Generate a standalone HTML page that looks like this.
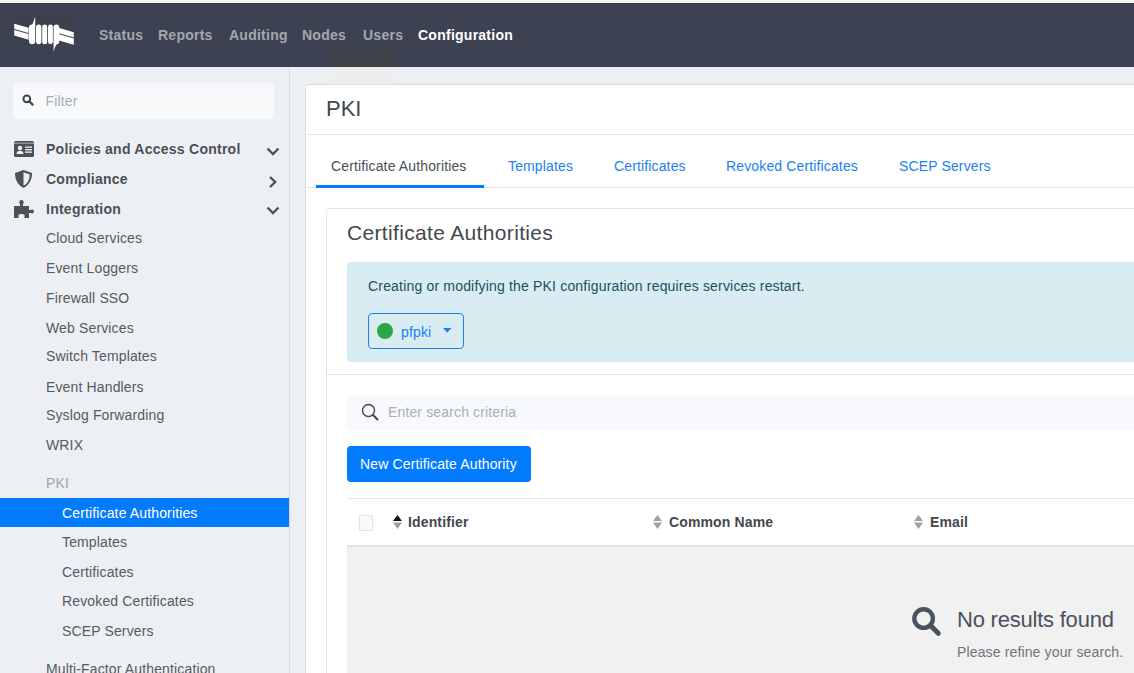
<!DOCTYPE html>
<html><head><meta charset="utf-8">
<style>
*{box-sizing:border-box;margin:0;padding:0}
html,body{width:1134px;height:673px;overflow:hidden;background:#eceff3;font-family:"Liberation Sans",sans-serif;font-size:14px;color:#495057;letter-spacing:0.01em}
.abs{position:absolute;white-space:nowrap}
#topband{left:0;top:0;width:1134px;height:3px;background:#f7f7f8}
#nav{left:0;top:3px;width:1134px;height:64px;background:#3d4252}
.nl{position:absolute;top:24px;font-weight:bold;letter-spacing:0.018em;font-size:14px;color:#a3a7af;line-height:16px}
#side{left:0;top:67px;width:289px;height:606px;background:#eceff3}
#sideborder{left:289px;top:67px;width:1px;height:606px;background:#d6d9de}
#filter{left:13px;top:83px;width:261px;height:36px;background:#f8f9fb;border-radius:4px}
.sh{position:absolute;left:46px;font-weight:bold;letter-spacing:0.018em;color:#4a4f56;line-height:16px}
.si{position:absolute;left:46px;color:#555b62;line-height:16px}
.ss{position:absolute;left:62px;color:#555b62;line-height:16px}
#active{left:0;top:498px;width:289px;height:29px;background:#037bfd}
#card{left:305px;top:84px;width:841px;height:600px;background:#fff;border:1px solid #dcdee2;border-radius:4px}
.tab{position:absolute;top:158px;color:#1b80f0;line-height:16px}
</style></head>
<body>
<div class="abs" id="topband"></div>
<div class="abs" id="nav">
  <div style="position:absolute;left:0;top:0;width:1134px;height:1px;background:#383c4a"></div>
  <div style="position:absolute;left:14px;top:13px;width:61px;height:28px;background:#3c414c"></div>
  <div style="position:absolute;left:331px;top:42px;width:64px;height:22px;background:#3e4349"></div>
  <svg style="position:absolute;left:0;top:-3px" width="90" height="67" viewBox="0 0 90 67">
    <g fill="#fff">
      <polygon points="14.2,23.8 28.6,27.8 28.6,33.0 14.2,29.0"/>
      <polygon points="14.2,30.0 28.6,34.0 28.6,39.8 14.2,35.6"/>
      <polygon points="59,28 73.8,32.3 73.8,37.5 59,33.2"/>
      <polygon points="59,34.2 73.8,38.5 73.8,44.8 59,40.5"/>
      <rect x="29" y="24.4" width="6.2" height="19.8" rx="3"/>
      <rect x="36" y="24.4" width="5.4" height="19.8" rx="2.7"/>
      <rect x="42.2" y="24.4" width="5.0" height="19.8" rx="2.5"/>
      <rect x="48" y="24.4" width="4.9" height="19.8" rx="2.45"/>
      <rect x="53.6" y="24.4" width="5.6" height="19.8" rx="2.8"/>
      <path d="M30,27 C33,25 34,20 35.2,16.5 L35.2,27 Z"/>
      <path d="M58.5,41.5 C56,44 54.5,48 53.6,52 L53.6,41 Z"/>
    </g>
  </svg>
  <div class="nl" style="left:99px">Status</div>
  <div class="nl" style="left:158px">Reports</div>
  <div class="nl" style="left:229px">Auditing</div>
  <div class="nl" style="left:302px">Nodes</div>
  <div class="nl" style="left:363px">Users</div>
  <div class="nl" style="left:418px;color:#fff">Configuration</div>
</div>

<div class="abs" id="side">
</div>
<div class="abs" id="sideborder"></div>
<div class="abs" style="left:331px;top:67px;width:64px;height:14px;background:#eeeeef"></div>
<div class="abs" id="filter">
  <svg style="position:absolute;left:9px;top:11px" width="12" height="12" viewBox="0 0 12 12"><circle cx="4.8" cy="4.8" r="3.4" fill="none" stroke="#3f444b" stroke-width="2"/><line x1="7.3" y1="7.3" x2="10.6" y2="10.6" stroke="#3f444b" stroke-width="2.2" stroke-linecap="round"/></svg>
  <div style="position:absolute;left:32.5px;top:10px;color:#a9aeb4;line-height:16px">Filter</div>
</div>

<!-- sidebar headers -->
<svg class="abs" style="left:14px;top:141px" width="20" height="16" viewBox="0 0 20 16">
  <rect x="0" y="0" width="20" height="16" rx="1.5" fill="#4e5258"/>
  <rect x="0" y="1.6" width="20" height="1.2" fill="#eceff3" opacity="0.5"/>
  <circle cx="6" cy="7" r="2.2" fill="#eceff3"/>
  <path d="M2.5,13 C2.5,10.5 4,9.8 6,9.8 C8,9.8 9.5,10.5 9.5,13 Z" fill="#eceff3"/>
  <rect x="11" y="5.5" width="7" height="1.3" fill="#eceff3"/>
  <rect x="11" y="8" width="7" height="1.3" fill="#eceff3"/>
  <rect x="11" y="10.5" width="7" height="1.3" fill="#eceff3"/>
</svg>
<div class="sh" style="top:141px">Policies and Access Control</div>
<svg class="abs" style="left:15px;top:170px" width="17" height="18" viewBox="0 0 17 18">
  <path d="M8.5,0 L17,3 C17,10 14,15 8.5,18 C3,15 0,10 0,3 Z" fill="#4e5258"/>
  <path d="M8.5,2.2 L14.8,4.4 C14.6,9.8 12.4,13.6 8.5,15.8 Z" fill="#eceff3"/>
</svg>
<div class="sh" style="top:171px">Compliance</div>
<svg class="abs" style="left:14px;top:200px" width="20" height="18" viewBox="0 0 20 18">
  <g fill="#4e5258">
    <rect x="0" y="6" width="15" height="12"/>
    <rect x="6" y="2" width="3" height="5"/>
    <circle cx="7.5" cy="2.2" r="2.2"/>
    <rect x="14" y="10" width="4" height="3"/>
    <circle cx="18" cy="11.5" r="2"/>
  </g>
  <path d="M4.5,18 L4.5,15.5 C4.5,13.5 10.5,13.5 10.5,15.5 L10.5,18 Z" fill="#eceff3"/>
</svg>
<div class="sh" style="top:201px">Integration</div>

<svg class="abs" style="left:266px;top:146.6px" width="14" height="9" viewBox="0 0 14 9"><polyline points="1.5,1.5 7,7 12.5,1.5" fill="none" stroke="#4e5258" stroke-width="2.4"/></svg>
<svg class="abs" style="left:268px;top:175.5px" width="10" height="12" viewBox="0 0 10 12"><polyline points="2,1 7.2,6 2,11" fill="none" stroke="#4e5258" stroke-width="2.4"/></svg>
<svg class="abs" style="left:266px;top:205.6px" width="14" height="9" viewBox="0 0 14 9"><polyline points="1.5,1.5 7,7 12.5,1.5" fill="none" stroke="#4e5258" stroke-width="2.4"/></svg>

<div class="si" style="top:230px">Cloud Services</div>
<div class="si" style="top:260px">Event Loggers</div>
<div class="si" style="top:290px">Firewall SSO</div>
<div class="si" style="top:320px">Web Services</div>
<div class="si" style="top:348px">Switch Templates</div>
<div class="si" style="top:379px">Event Handlers</div>
<div class="si" style="top:407px">Syslog Forwarding</div>
<div class="si" style="top:437px">WRIX</div>
<div class="si" style="top:475px;color:#9ea3a9">PKI</div>
<div class="abs" id="active"></div>
<div class="ss" style="top:505px;color:#fff">Certificate Authorities</div>
<div class="ss" style="top:534px">Templates</div>
<div class="ss" style="top:564px">Certificates</div>
<div class="ss" style="top:593px">Revoked Certificates</div>
<div class="ss" style="top:623px">SCEP Servers</div>
<div class="si" style="top:661px">Multi-Factor Authentication</div>

<!-- main card -->
<div class="abs" id="card"></div>
<div class="abs" style="left:326px;top:98px;font-size:22px;line-height:22px;letter-spacing:0;color:#43484e">PKI</div>
<div class="abs" style="left:307px;top:134px;width:827px;height:1px;background:#e3e5e8"></div>
<div class="abs" style="left:307px;top:187px;width:827px;height:1px;background:#e3e5e8"></div>
<div class="abs" style="left:316px;top:185px;width:168px;height:3px;background:#037bfd"></div>
<div class="tab" style="left:331px;color:#495057">Certificate Authorities</div>
<div class="tab" style="left:508px">Templates</div>
<div class="tab" style="left:614px">Certificates</div>
<div class="tab" style="left:726px">Revoked Certificates</div>
<div class="tab" style="left:899px">SCEP Servers</div>

<!-- inner card -->
<div class="abs" style="left:326px;top:208px;width:820px;height:480px;border:1px solid #e3e5e8;border-radius:4px;background:#fff"></div>
<div class="abs" style="left:347px;top:222px;font-size:21px;line-height:22px;letter-spacing:0.016em;color:#43484e">Certificate Authorities</div>
<div class="abs" style="left:347px;top:262px;width:800px;height:100px;background:#d9ecf2;border:1px solid #d2e8ef;border-radius:4px"></div>
<div class="abs" style="left:368px;top:278px;color:#20505c;line-height:16px;letter-spacing:0.013em">Creating or modifying the PKI configuration requires services restart.</div>
<div class="abs" style="left:368px;top:313px;width:96px;height:36px;border:1px solid #1b7ff5;border-radius:4px"></div>
<div class="abs" style="left:377px;top:323px;width:16px;height:16px;border-radius:50%;background:#2aa646"></div>
<div class="abs" style="left:401px;top:324px;color:#1b7ff5;line-height:16px">pfpki</div>
<svg class="abs" style="left:443px;top:328px" width="9" height="5" viewBox="0 0 9 5"><polygon points="0,0 8.5,0 4.25,4.5" fill="#1b7ff5"/></svg>
<div class="abs" style="left:327px;top:374px;width:810px;height:1px;background:#e3e5e8"></div>

<div class="abs" style="left:347px;top:396px;width:800px;height:34px;background:#f7f9fc;border-radius:4px"></div>
<svg class="abs" style="left:361px;top:403px" width="18" height="18" viewBox="0 0 18 18"><circle cx="7.5" cy="7.5" r="6" fill="none" stroke="#43484e" stroke-width="1.4"/><line x1="11.8" y1="11.8" x2="16.5" y2="16.5" stroke="#43484e" stroke-width="2" stroke-linecap="round"/></svg>
<div class="abs" style="left:388px;top:404px;color:#aab0b6;line-height:16px">Enter search criteria</div>

<div class="abs" style="left:347px;top:446px;width:184px;height:36px;background:#037bfd;border-radius:4px"></div>
<div class="abs" style="left:360px;top:456px;color:#fff;line-height:16px">New Certificate Authority</div>

<div class="abs" style="left:347px;top:498px;width:800px;height:1px;background:#e3e5e8"></div>
<div class="abs" style="left:359px;top:515px;width:14px;height:16px;background:#f6f8fa;border:1px solid #dfe2e6;border-radius:1px"></div>
<svg class="abs" style="left:393px;top:515px" width="9" height="14" viewBox="0 0 9 14"><polygon points="4.5,0 9,6 0,6" fill="#111"/><polygon points="0,7.5 9,7.5 4.5,14" fill="#a0a0a0"/></svg>
<div class="abs" style="left:408px;top:514px;font-weight:bold;color:#43484e;line-height:16px">Identifier</div>
<svg class="abs" style="left:653px;top:515px" width="9" height="14" viewBox="0 0 9 14"><polygon points="4.5,0 9,6 0,6" fill="#a0a0a0"/><polygon points="0,7.5 9,7.5 4.5,14" fill="#a0a0a0"/></svg>
<div class="abs" style="left:669px;top:514px;font-weight:bold;color:#43484e;line-height:16px">Common Name</div>
<svg class="abs" style="left:914px;top:515px" width="9" height="14" viewBox="0 0 9 14"><polygon points="4.5,0 9,6 0,6" fill="#a0a0a0"/><polygon points="0,7.5 9,7.5 4.5,14" fill="#a0a0a0"/></svg>
<div class="abs" style="left:930px;top:514px;font-weight:bold;color:#43484e;line-height:16px">Email</div>
<div class="abs" style="left:347px;top:545px;width:800px;height:2px;background:#dfe2e6"></div>
<div class="abs" style="left:347px;top:547px;width:800px;height:130px;background:#f1f1f1"></div>

<svg class="abs" style="left:911px;top:606px" width="31" height="31" viewBox="0 0 31 31"><circle cx="12.6" cy="12.6" r="9.3" fill="none" stroke="#4a5260" stroke-width="4.4"/><line x1="19.5" y1="19.5" x2="27.3" y2="27.3" stroke="#4a5260" stroke-width="5" stroke-linecap="round"/></svg>
<div class="abs" style="left:957px;top:609px;font-size:22px;line-height:22px;letter-spacing:-0.01em;color:#4a5260">No results found</div>
<div class="abs" style="left:957px;top:644px;color:#6c757d;line-height:16px">Please refine your search.</div>
</body></html>
